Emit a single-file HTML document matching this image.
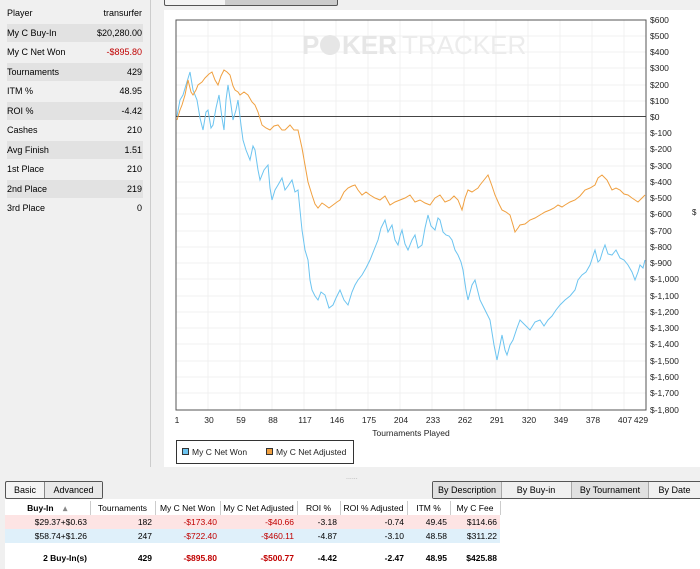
<!DOCTYPE html><html><head><style>
body{margin:0;width:700px;height:569px;overflow:hidden;background:#f0f0f0;font-family:"Liberation Sans",sans-serif;font-size:9px;color:#000;position:relative}
.lp{position:absolute;left:0;top:0;width:150px;height:467px;background:#f0f0f0}
.row{position:absolute;left:7px;width:136px;height:18px;line-height:18px}
.row.g{background:#e2e2e2}
.row span{position:absolute;right:1px}
.red{color:#c00000}
.cp{position:absolute;left:164px;top:10px;width:536px;height:457px;background:#fff}
.btn{position:absolute;height:16px;line-height:16px;border:1px solid #555;border-radius:2px;background:#f4f4f4;font-size:9px}
.btn div{position:absolute;top:0;height:16px;text-align:center}
table{border-collapse:collapse;position:absolute;left:5px;top:501px;font-size:8.5px;table-layout:fixed;width:495px}
td{height:14px;padding:0 3px;text-align:right;white-space:nowrap;overflow:hidden}
th{height:14px;font-weight:normal;text-align:center;border-right:1px solid #ccc;background:#fff;padding:0 2px;white-space:nowrap;overflow:hidden}
</style></head><body>
<div class="lp">
<div class="row" style="top:4px">Player<span>transurfer</span></div>
<div class="row g" style="top:24px">My C Buy-In<span>$20,280.00</span></div>
<div class="row" style="top:43px">My C Net Won<span class="red">-$895.80</span></div>
<div class="row g" style="top:63px">Tournaments<span>429</span></div>
<div class="row" style="top:82px">ITM %<span>48.95</span></div>
<div class="row g" style="top:102px">ROI %<span>-4.42</span></div>
<div class="row" style="top:121px">Cashes<span>210</span></div>
<div class="row g" style="top:141px">Avg Finish<span>1.51</span></div>
<div class="row" style="top:160px">1st Place<span>210</span></div>
<div class="row g" style="top:180px">2nd Place<span>219</span></div>
<div class="row" style="top:199px">3rd Place<span>0</span></div>
</div>
<div style="position:absolute;left:150px;top:0;width:1px;height:467px;background:#ccc"></div>
<div style="position:absolute;left:164px;top:-2px;width:172px;height:6px;border:1px solid #555;border-radius:2px;background:linear-gradient(90deg,#f4f4f4 35%,#ccc 35%)"></div>
<div class="cp"></div>
<svg style="position:absolute;left:0;top:0" width="700" height="470" font-family="Liberation Sans" font-size="8.5">
<g stroke="#f0f0f0" stroke-width="1">
<path d="M208 20V410M240 20V410M272 20V410M304 20V410M336 20V410M368 20V410M400 20V410M432 20V410M464 20V410M496 20V410M528 20V410M560 20V410M592 20V410M624 20V410"/>
<path d="M176 36H646M176 52H646M176 68H646M176 85H646M176 101H646M176 133H646M176 149H646M176 166H646M176 182H646M176 198H646M176 214H646M176 231H646M176 247H646M176 263H646M176 279H646M176 296H646M176 312H646M176 328H646M176 344H646M176 361H646M176 377H646M176 393H646"/>
</g>
<text x="302" y="54" font-size="26" font-weight="bold" fill="#e6e6e6">P</text>
<circle cx="330" cy="45" r="10" fill="#e6e6e6"/>
<text x="342" y="54" font-size="26" font-weight="bold" fill="#e6e6e6">KER</text><text x="402" y="54" font-size="26" fill="#ececec">TRACKER</text>
<rect x="176" y="20" width="470" height="390" fill="none" stroke="#555"/>
<path d="M176 116.5H646" stroke="#444"/>
<polyline fill="none" stroke="#6cc4f0" stroke-width="1" points="177,116 180,100 183,95 186,85 190,72 193,90 197,100 200,118 203,130 206,112 208,110 211,128 213,125 216,108 219,95 222,118 224,130 226,100 228,85 231,105 233,120 236,110 238,100 241,125 243,140 246,150 250,160 253,146 255,150 258,170 260,180 264,170 268,165 270,188 272,200 275,190 278,185 282,178 285,190 288,186 292,180 295,192 298,190 300,210 302,230 305,250 308,260 310,280 312,290 315,296 318,300 321,292 325,295 329,308 333,305 336,298 340,290 344,300 348,305 352,292 355,285 358,280 362,275 366,268 370,260 374,250 378,240 381,228 385,220 388,232 392,225 395,240 398,245 400,236 402,230 405,244 408,250 412,240 415,235 418,248 422,245 425,228 428,215 431,226 435,230 438,218 440,220 443,232 446,235 449,236 452,240 455,250 458,255 461,262 463,270 466,290 468,300 472,285 475,280 478,292 480,300 485,310 490,320 494,345 497,360 500,345 502,335 505,350 507,355 510,345 513,340 517,328 520,320 525,325 530,330 535,322 540,320 544,326 548,320 552,316 556,310 560,305 565,300 570,296 575,290 578,280 582,275 586,272 590,265 593,256 595,250 598,262 600,260 603,250 605,245 608,254 612,255 616,250 620,258 624,260 628,265 632,272 635,280 638,272 640,265 643,268 645,260"/>
<polyline fill="none" stroke="#f0a040" stroke-width="1" points="177,120 180,110 182,105 185,95 188,80 191,92 193,95 196,90 198,85 202,82 205,78 209,74 212,72 215,80 218,85 221,76 224,70 227,72 230,75 233,86 235,90 238,92 240,95 244,92 248,95 252,102 255,105 258,112 262,125 266,128 270,130 274,126 278,125 282,130 285,130 288,127 290,125 294,130 298,130 302,148 305,165 308,182 312,195 315,204 318,208 322,203 325,205 329,208 333,205 337,202 340,200 344,192 348,188 352,186 355,185 358,190 362,195 366,192 370,195 375,198 380,200 385,196 390,205 395,202 400,200 405,198 410,195 415,202 420,200 425,203 430,205 435,198 440,195 445,202 450,200 454,196 458,200 460,205 462,210 465,198 468,190 472,192 475,190 478,188 480,185 484,180 488,175 492,186 495,195 499,204 502,210 506,212 510,215 513,225 515,232 518,228 520,225 525,224 530,220 535,218 540,215 545,212 550,210 554,208 558,205 562,207 565,205 570,202 575,200 580,196 585,190 590,188 595,185 598,178 602,175 605,178 607,180 610,186 612,190 616,188 620,190 624,194 628,195 632,198 635,200 638,202 640,200 643,197 645,195"/>
<g fill="#222" text-anchor="start">
<text x="650" y="23">$600</text><text x="650" y="39">$500</text><text x="650" y="55">$400</text><text x="650" y="71">$300</text><text x="650" y="88">$200</text><text x="650" y="104">$100</text><text x="650" y="120">$0</text><text x="650" y="136">$-100</text><text x="650" y="152">$-200</text><text x="650" y="169">$-300</text><text x="650" y="185">$-400</text><text x="650" y="201">$-500</text><text x="650" y="217">$-600</text><text x="650" y="234">$-700</text><text x="650" y="250">$-800</text><text x="650" y="266">$-900</text><text x="650" y="282">$-1,000</text><text x="650" y="299">$-1,100</text><text x="650" y="315">$-1,200</text><text x="650" y="331">$-1,300</text><text x="650" y="347">$-1,400</text><text x="650" y="364">$-1,500</text><text x="650" y="380">$-1,600</text><text x="650" y="396">$-1,700</text><text x="650" y="413">$-1,800</text>
</g>
<text x="692" y="215" font-size="8" fill="#222">$</text>
<g fill="#222" text-anchor="middle">
<text x="177" y="423">1</text><text x="209" y="423">30</text><text x="241" y="423">59</text><text x="273" y="423">88</text><text x="305" y="423">117</text><text x="337" y="423">146</text><text x="369" y="423">175</text><text x="401" y="423">204</text><text x="433" y="423">233</text><text x="465" y="423">262</text><text x="497" y="423">291</text><text x="529" y="423">320</text><text x="561" y="423">349</text><text x="593" y="423">378</text><text x="625" y="423">407</text><text x="641" y="423">429</text>
<text x="411" y="436">Tournaments Played</text>
</g>
<rect x="176.5" y="440.5" width="177" height="23" fill="#fff" stroke="#333"/>
<rect x="182.5" y="448.5" width="6" height="6" fill="#6cc4f0" stroke="#333"/>
<text x="192" y="455" fill="#222">My C Net Won</text>
<rect x="266.5" y="448.5" width="6" height="6" fill="#f0a040" stroke="#333"/>
<text x="276" y="455" fill="#222">My C Net Adjusted</text>
</svg>
<div style="position:absolute;left:346px;top:474px;color:#aaa;font-size:7px">......</div>
<div class="btn" style="left:5px;top:481px;width:96px"><div style="left:0;width:38px;border-right:1px solid #888">Basic</div><div style="left:39px;width:57px;background:#e8e8e8">Advanced</div></div>
<div class="btn" style="left:432px;top:481px;width:268px;background:#f0f0f0"><div style="left:0;width:68px;background:#e0e0e0;border-right:1px solid #aaa">By Description</div><div style="left:69px;width:68px">By Buy-in</div><div style="left:138px;width:76px;background:#e0e0e0;border-left:1px solid #aaa;border-right:1px solid #aaa">By Tournament</div><div style="left:215px;width:53px">By Date</div></div>
<div style="position:absolute;left:5px;top:499px;width:695px;height:70px;background:#fff"></div>
<table>
<colgroup><col style="width:85px"><col style="width:65px"><col style="width:65px"><col style="width:77px"><col style="width:43px"><col style="width:67px"><col style="width:43px"><col style="width:50px"></colgroup>
<tr><th style="font-weight:bold">Buy-In &nbsp; &nbsp;<span style="color:#888">▴</span></th><th>Tournaments</th><th>My C Net Won</th><th>My C Net Adjusted</th><th>ROI %</th><th>ROI % Adjusted</th><th>ITM %</th><th>My C Fee</th></tr>
<tr style="background:#fde4e4"><td>$29.37+$0.63</td><td>182</td><td class="red">-$173.40</td><td class="red">-$40.66</td><td>-3.18</td><td>-0.74</td><td>49.45</td><td>$114.66</td></tr>
<tr style="background:#dff0fa"><td>$58.74+$1.26</td><td>247</td><td class="red">-$722.40</td><td class="red">-$460.11</td><td>-4.87</td><td>-3.10</td><td>48.58</td><td>$311.22</td></tr>
<tr><td colspan="8" style="height:8px"></td></tr>
<tr style="font-weight:bold"><td>2 Buy-In(s)</td><td>429</td><td class="red">-$895.80</td><td class="red">-$500.77</td><td>-4.42</td><td>-2.47</td><td>48.95</td><td>$425.88</td></tr>
</table>
</body></html>
